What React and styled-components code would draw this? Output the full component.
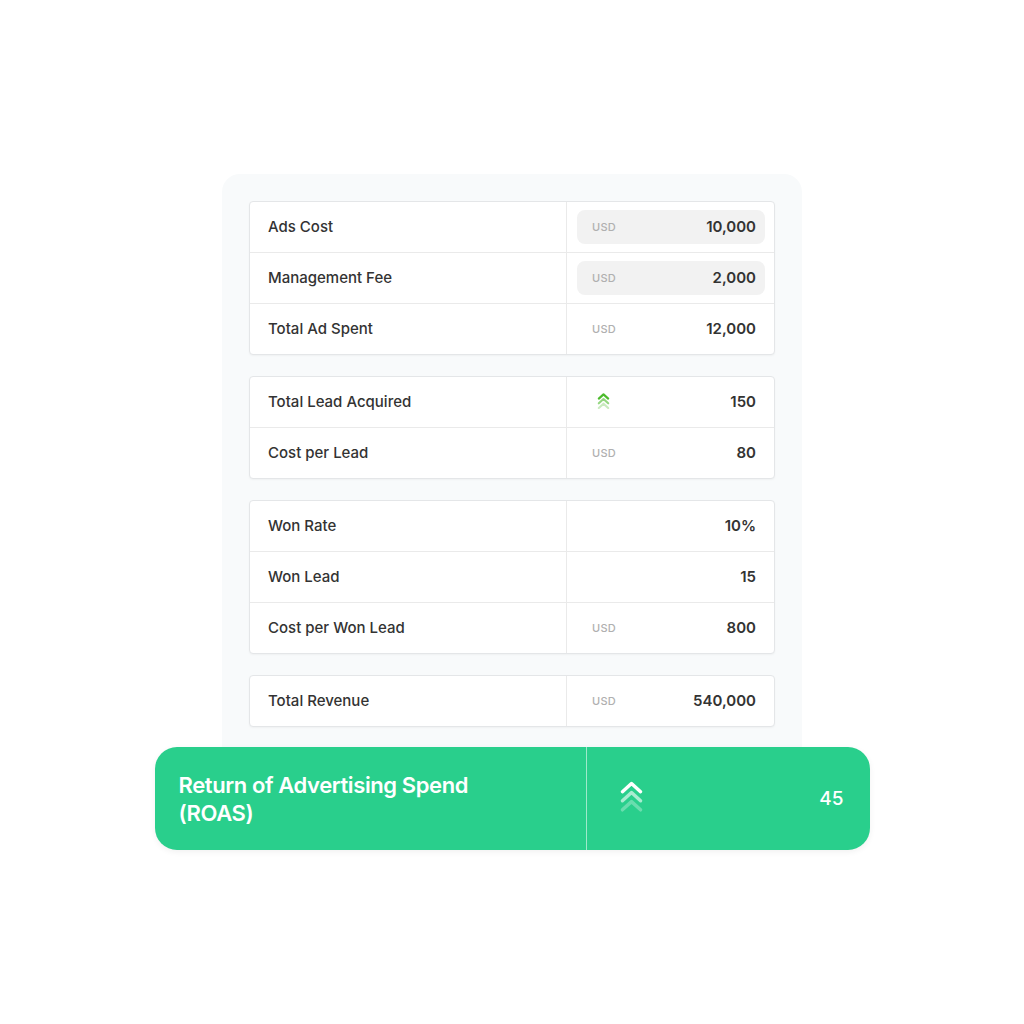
import React from "react";
import styled, { createGlobalStyle } from "styled-components";

const GlobalStyle = createGlobalStyle`
  html, body {
    margin: 0;
    padding: 0;
    background: #ffffff;
    font-family: Inter, "Noto Sans", sans-serif;
  }
`;

const groups = [
  [
    { label: "Ads Cost", unit: "USD", value: "10,000", input: true },
    { label: "Management Fee", unit: "USD", value: "2,000", input: true },
    { label: "Total Ad Spent", unit: "USD", value: "12,000" },
  ],
  [
    { label: "Total Lead Acquired", icon: true, value: "150" },
    { label: "Cost per Lead", unit: "USD", value: "80" },
  ],
  [
    { label: "Won Rate", value: "10%" },
    { label: "Won Lead", value: "15" },
    { label: "Cost per Won Lead", unit: "USD", value: "800" },
  ],
  [{ label: "Total Revenue", unit: "USD", value: "540,000" }],
];

const Chevrons = ({ color, size = 16, stroke = 2.4 }) => (
  <svg width={size} height={size * 1.45} viewBox="0 0 16 23" fill="none">
    <path d="M3 8 L8 3.5 L13 8" stroke={color} strokeWidth={stroke} strokeLinecap="round" strokeLinejoin="round" />
    <path d="M3 13 L8 8.5 L13 13" stroke={color} strokeOpacity="0.6" strokeWidth={stroke} strokeLinecap="round" strokeLinejoin="round" />
    <path d="M3 18 L8 13.5 L13 18" stroke={color} strokeOpacity="0.3" strokeWidth={stroke} strokeLinecap="round" strokeLinejoin="round" />
  </svg>
);

const App = () => {
  return (
    <>
      <GlobalStyle />
      <Page>
        <Wrap>
          <Panel>
            {groups.map((rows, gi) => (
              <Table key={gi}>
                {rows.map((row) => (
                  <Row key={row.label}>
                    <Label>{row.label}</Label>
                    <ValueCell>
                      <Field $input={row.input}>
                        {row.icon ? (
                          <IconSlot>
                            <Chevrons color="#4cbb2c" size={15} stroke={2.3} />
                          </IconSlot>
                        ) : (
                          <Unit>{row.unit}</Unit>
                        )}
                        <Value>{row.value}</Value>
                      </Field>
                    </ValueCell>
                  </Row>
                ))}
              </Table>
            ))}
          </Panel>
          <Result>
            <ResultLabel>
              Return of Advertising Spend
              <br />
              (ROAS)
            </ResultLabel>
            <ResultValue>
              <Chevrons color="#ffffff" size={29} stroke={1.9} />
              <span>45</span>
            </ResultValue>
          </Result>
        </Wrap>
      </Page>
    </>
  );
};

const Page = styled.div`
  width: 1024px;
  height: 1024px;
  display: flex;
  justify-content: center;
  padding-top: 174px;
  box-sizing: border-box;
`;

const Wrap = styled.div`
  width: 715px;
  display: flex;
  flex-direction: column;
  align-items: center;
`;

const Panel = styled.div`
  width: 580px;
  box-sizing: border-box;
  padding: 27px 27px 20px;
  background: #f8fafb;
  border-radius: 18px 18px 0 0;
  display: flex;
  flex-direction: column;
  gap: 21px;
`;

const Table = styled.div`
  background: #ffffff;
  border: 1px solid #e4e6e8;
  border-radius: 4px;
  box-shadow: 0 1px 2px rgba(0, 0, 0, 0.04);
`;

const Row = styled.div`
  display: grid;
  grid-template-columns: 317px 1fr;
  height: 50px;
  & + & {
    border-top: 1px solid #eaeaea;
  }
`;

const Label = styled.div`
  display: flex;
  align-items: center;
  padding-left: 18px;
  font-size: 15px;
  line-height: 20px;
  font-weight: 500;
  color: #333333;
  border-right: 1px solid #eaeaea;
`;

const ValueCell = styled.div`
  display: flex;
  align-items: center;
  padding: 0 9px 0 10px;
`;

const Field = styled.div`
  flex: 1;
  height: 34px;
  display: flex;
  align-items: center;
  justify-content: space-between;
  padding: 0 9px 0 15px;
  border-radius: 8px;
  background: ${(p) => (p.$input ? "#f2f2f2" : "transparent")};
`;

const Unit = styled.span`
  font-size: 11px;
  font-weight: 500;
  color: #b0b0b0;
  letter-spacing: 0.3px;
`;

const IconSlot = styled.span`
  display: flex;
  padding-left: 4px;
`;

const Value = styled.span`
  font-size: 15px;
  line-height: 20px;
  font-weight: 600;
  color: #333333;
`;

const Result = styled.div`
  width: 715px;
  height: 103px;
  box-sizing: border-box;
  background: #29cf8c;
  border-radius: 22px;
  display: grid;
  grid-template-columns: 432px 1fr;
  box-shadow: 0 2px 6px rgba(0, 0, 0, 0.06);
`;

const ResultLabel = styled.div`
  display: flex;
  flex-direction: column;
  justify-content: center;
  padding-left: 24px;
  font-size: 22px;
  line-height: 28px;
  font-weight: 600;
  letter-spacing: -0.4px;
  color: #ffffff;
  border-right: 1px solid rgba(255, 255, 255, 0.55);
`;

const ResultValue = styled.div`
  display: flex;
  align-items: center;
  justify-content: space-between;
  padding: 0 26px 0 30px;
  color: #ffffff;
  font-size: 19px;
  font-weight: 500;
`;

export default App;
